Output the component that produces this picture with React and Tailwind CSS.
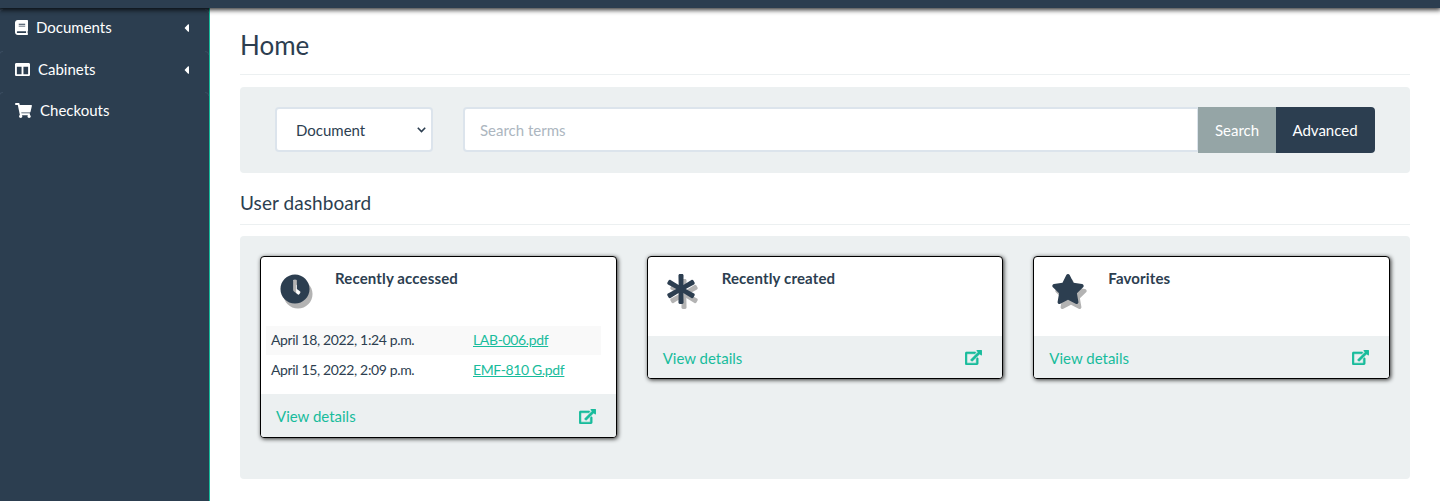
import React from "react";
import {
  FaBook,
  FaColumns,
  FaShoppingCart,
  FaCaretLeft,
  FaClock,
  FaAsterisk,
  FaStar,
} from "react-icons/fa";

const menu = [
  { label: "Documents", icon: FaBook, width: "w-[13px]", height: "h-[42px]", caret: true },
  { label: "Cabinets", icon: FaColumns, width: "w-[15px]", height: "h-[41px]", caret: true },
  { label: "Checkouts", icon: FaShoppingCart, width: "w-[17px]", height: "h-[41px]", caret: false },
];

const recent = [
  ["April 18, 2022, 1:24 p.m.", "LAB-006.pdf"],
  ["April 15, 2022, 2:09 p.m.", "EMF-810 G.pdf"],
];

function Corners() {
  return (
    <>
      <span className="absolute -left-px top-0 size-1 rounded-tl border-l border-t border-[#3a4c5f]" />
      <span className="absolute right-0 top-0 size-1 rounded-tr border-r border-t border-[#3a4c5f]" />
    </>
  );
}

function ExternalLink({ className }) {
  return (
    <svg className={className} viewBox="0 0 576 512" fill="currentColor" stroke="currentColor" strokeWidth="18">
      <path d="M576 24v127.984c0 21.461-25.96 31.98-40.971 16.971l-35.707-35.709-243.523 243.523c-9.373 9.373-24.568 9.373-33.941 0l-22.627-22.627c-9.373-9.373-9.373-24.569 0-33.941L442.756 76.676l-35.703-35.705C391.982 25.9 402.656 0 424.024 0H552c13.255 0 24 10.745 24 24zM407.029 270.794l-16 16A23.999 23.999 0 0 0 384 303.765V448H64V128h264a24.003 24.003 0 0 0 16.97-7.029l16-16C376.089 89.851 365.381 64 344 64H48C21.49 64 0 85.49 0 112v352c0 26.51 21.49 48 48 48h352c26.51 0 48-21.49 48-48V287.764c0-21.382-25.852-32.09-40.971-16.97z" />
    </svg>
  );
}

function Sidebar() {
  return (
    <nav className="h-[493px] w-[210px] shrink-0 border-r border-[#18bc9c] bg-[#2c3e50] pt-px">
      {menu.map(({ label, icon: Icon, width, height, caret }) => (
        <a key={label} className={`relative flex items-center pl-[15px] pr-5 text-white ${height}`}>
          <Corners />
          <Icon className={`-mt-[5px] h-[15px] ${width}`} />
          <span className="-mt-[5px] ml-2">{label}</span>
          {caret && <FaCaretLeft className="-mt-1 ml-auto h-[14px] w-[5px]" />}
        </a>
      ))}
    </nav>
  );
}

function Widget({ title, icon: Icon, iconClass, rows }) {
  return (
    <section className="flex-1 overflow-hidden rounded border border-black bg-white shadow-[1px_1px_4px_rgba(0,0,0,0.8)]">
      <div className="flex h-[69px] items-start pt-[17px]">
        <div className="w-[74px] shrink-0 pl-[19px]">
          <Icon className={`h-[30px] text-[#2c3e50] drop-shadow-[3px_5px_0_#b3b3b3] ${iconClass}`} />
        </div>
        <h3 className="-mt-[6px] text-[15px] font-bold leading-[21px] tracking-[0.14px]">{title}</h3>
      </div>
      {rows ? (
        <div className="h-[68px] pl-[5px] pr-[15px] text-[14px] leading-[20px] tracking-[-0.36px]">
          {rows.map(([date, name], i) => (
            <div key={name} className={`flex items-center pl-[5px] ${i ? "h-[30px]" : "h-[29px] bg-[#f9f9f9] pb-px"}`}>
              <span className="w-[202px]">{date}</span>
              <a className="text-[#18bc9c] underline">{name}</a>
            </div>
          ))}
        </div>
      ) : (
        <div className="h-[10px]" />
      )}
      <a
        className={`flex items-center justify-between bg-[#ecf0f1] pl-[15px] pr-[20px] text-[#18bc9c] ${rows ? "h-[43px]" : "h-[42px]"}`}
      >
        <span className="mt-[2px]">View details</span>
        <ExternalLink className="mt-px h-[15px] w-[17px]" />
      </a>
    </section>
  );
}

export default function App() {
  return (
    <div className="h-[501px] overflow-hidden bg-white font-['Lato',sans-serif] text-[15px] leading-[21px] text-[#2c3e50]">
      <header className="relative z-10 h-2 bg-[#2c3e50] shadow-[0_1px_5px_1px_rgba(0,0,0,0.8)]" />
      <div className="flex">
        <Sidebar />
        <main className="flex-1 px-[30px]">
          <h1 className="flex h-[67px] items-center border-b border-[#ecf0f1] pt-2 text-[26px] leading-[29px]">Home</h1>
          <div className="mt-3 flex h-[86px] rounded bg-[#ecf0f1] px-[35px] pt-5">
            <div className="flex h-[45px] w-[158px] items-center justify-between rounded border-2 border-[#dce4ec] bg-white pl-[19px] pr-[5px]">
              <span className="mt-0.5">Document</span>
              <svg className="h-[6px] w-[9px]" viewBox="0 0 9 6" fill="none" stroke="#2c3e50" strokeWidth="1.6">
                <path d="M.8 .8 4.5 4.5 8.2 .8" />
              </svg>
            </div>
            <div className="ml-[30px] flex h-[45px] flex-1 items-center rounded-l border-2 border-r border-[#dce4ec] bg-white pl-[15px] pt-0.5 text-[#acb6c0]">
              Search terms
            </div>
            <button className="h-[46px] w-[78px] bg-[#95a5a6] pt-px text-white">Search</button>
            <button className="h-[46px] w-[99px] rounded-r bg-[#2c3e50] pr-px pt-px text-white">Advanced</button>
          </div>
          <h2 className="flex h-[52px] items-center border-b border-[#ecf0f1] pt-[7px] text-[19px] tracking-[0.07px]">
            User dashboard
          </h2>
          <div className="mt-[11px] flex h-[243px] items-start gap-[30px] rounded bg-[#ecf0f1] p-5">
            <Widget title="Recently accessed" icon={FaClock} iconClass="w-[30px]" rows={recent} />
            <Widget title="Recently created" icon={FaAsterisk} iconClass="w-[30px] -ml-px" />
            <Widget title="Favorites" icon={FaStar} iconClass="w-[34px] -ml-0.5" />
          </div>
        </main>
      </div>
    </div>
  );
}
